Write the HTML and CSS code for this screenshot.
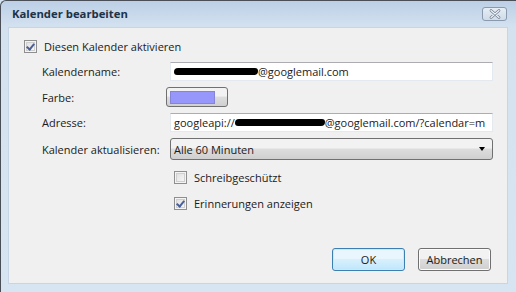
FILE: index.html
```html
<!DOCTYPE html>
<html lang="de">
<head>
    <meta charset="UTF-8">
    <title>Kalender bearbeiten</title>
    <link rel="stylesheet" href="styles.css">
</head>
<body>
    <div class="window">
        <div class="titlebar">
            <span class="title">Kalender bearbeiten</span>
            <span class="close">
                <svg width="14" height="10" viewBox="0 0 14 10">
                    <path d="M3 1.5 L11 8.5 M11 1.5 L3 8.5" stroke="#6b7b8e" stroke-width="2.6" stroke-linecap="round"/>
                    <path d="M3 1.5 L11 8.5 M11 1.5 L3 8.5" stroke="#f4f7fa" stroke-width="1.2" stroke-linecap="round"/>
                </svg>
            </span>
        </div>

        <div class="client">
            <div class="check">
                <span class="box checked"></span>
                <span>Diesen Kalender aktivieren</span>
            </div>

            <div class="form">
                <div class="label">Kalendername:</div>
                <div class="input"><span class="redact redact-name"></span>@googlemail.com</div>

                <div class="label">Farbe:</div>
                <div><span class="color-btn"><span class="swatch"></span></span></div>

                <div class="label">Adresse:</div>
                <div class="input">googleapi://<span class="redact redact-url"></span>@googlemail.com/?calendar=m</div>

                <div class="label">Kalender aktualisieren:</div>
                <div class="select">
                    <span>Alle 60 Minuten</span>
                    <span class="arrow"></span>
                </div>
            </div>

            <div class="checks">
                <div class="check">
                    <span class="box"></span>
                    <span>Schreibgeschützt</span>
                </div>
                <div class="check">
                    <span class="box checked"></span>
                    <span>Erinnerungen anzeigen</span>
                </div>
            </div>

            <div class="buttons">
                <button class="btn btn-default">OK</button>
                <button class="btn">Abbrechen</button>
            </div>
        </div>
    </div>
</body>
</html>
```

FILE: styles.css
```css
* {
    margin: 0;
    padding: 0;
    box-sizing: border-box;
}

body {
    width: 516px;
    height: 292px;
    overflow: hidden;
    font-family: "Open Sans", "Noto Sans", sans-serif;
    font-size: 11px;
    color: #1a1a1a;
    background: #d6e3f1;
}

.window {
    width: 530px;
    height: 300px;
    border-left: 1px solid #4a4f57;
    border-top: 1px solid #4a4f57;
    border-top-left-radius: 6px;
    background: linear-gradient(#bccfe5, #d4e2f0 26px, #d7e4f1);
    display: flex;
    flex-direction: column;
}

.titlebar {
    height: 26px;
    flex-shrink: 0;
    display: flex;
    align-items: center;
    padding: 0 0 0 11px;
    width: 516px;
}

.title {
    font-weight: 700;
    color: #1e3248;
    font-size: 11.3px;
    flex: 1;
    padding-bottom: 1px;
}

.close {
    width: 25px;
    height: 14px;
    margin-right: 10px;
    border: 1px solid #8a9aae;
    border-radius: 3px;
    background: linear-gradient(#e6edf5, #cfdbe8);
    display: flex;
    align-items: center;
    justify-content: center;
}

.client {
    width: 500px;
    height: 257px;
    margin-left: 7px;
    background: #f0f0f0;
    border: 1px solid #c7d5e5;
    padding: 12px 14px 12px 15px;
    display: flex;
    flex-direction: column;
}

.check {
    display: flex;
    align-items: center;
    gap: 7px;
    height: 13px;
}

.box {
    width: 13px;
    height: 13px;
    border: 1px solid #8f8f8f;
    background: linear-gradient(135deg, #dcdcdc, #fbfbfb);
    box-shadow: inset 0 0 0 1px #f4f4f4, inset 0 0 0 2px #cfcfcf;
    position: relative;
    flex-shrink: 0;
}

.box.checked::after {
    content: "";
    position: absolute;
    left: 3px;
    top: 1px;
    width: 3px;
    height: 6px;
    border-right: 2px solid #4a5f97;
    border-bottom: 2px solid #4a5f97;
    transform: rotate(40deg);
}

.form {
    margin-top: 9px;
    display: grid;
    grid-template-columns: 146px 323px;
    grid-template-rows: 19px 20px 19px 22px;
    row-gap: 6px;
    align-items: center;
}

.label {
    padding-left: 18px;
    white-space: nowrap;
}

.input {
    height: 19px;
    background: #fff;
    border: 1px solid #e3e9ef;
    border-top-color: #abadb3;
    padding: 0 3px;
    display: flex;
    align-items: center;
    white-space: nowrap;
    overflow: hidden;
}

.redact {
    display: inline-block;
    height: 7px;
    background: #000;
    border-radius: 4px 3px 4px 3px;
    flex-shrink: 0;
}

.redact-name {
    width: 84px;
}

.redact-url {
    width: 90px;
}

.color-btn {
    display: flex;
    align-items: center;
    justify-content: center;
    width: 62px;
    height: 20px;
    margin-left: -4px;
    border: 1px solid #707070;
    border-radius: 3px;
    background: linear-gradient(#f2f2f2 45%, #dddddd 50%, #cfcfcf);
    padding-right: 10px;
}

.swatch {
    width: 45px;
    height: 13px;
    background: #9797fb;
    border: 1px solid #8585d8;
}

.select {
    height: 22px;
    border: 1px solid #707070;
    border-radius: 3px;
    background: linear-gradient(#f2f2f2 45%, #dddddd 50%, #cfcfcf);
    display: flex;
    align-items: center;
    justify-content: space-between;
    padding: 0 7px 0 3px;
}

.arrow {
    width: 0;
    height: 0;
    border-left: 3.5px solid transparent;
    border-right: 3.5px solid transparent;
    border-top: 4px solid #000;
}

.checks {
    margin-top: 11px;
    margin-left: 150px;
    display: flex;
    flex-direction: column;
    gap: 13px;
}

.buttons {
    margin-top: auto;
    display: flex;
    justify-content: flex-end;
    gap: 13px;
    padding-right: 2px;
}

.btn {
    width: 73px;
    height: 23px;
    font-family: "Open Sans", "Noto Sans", sans-serif;
    font-size: 11px;
    color: #1a1a1a;
    border: 1px solid #707070;
    border-radius: 3px;
    background: linear-gradient(#f2f2f2 45%, #dddddd 50%, #cfcfcf);
    box-shadow: inset 0 0 0 1px #fcfcfc;
}

.btn-default {
    border-color: #3c7fb1;
    box-shadow: inset 0 0 0 1px #c9eaf9;
    background: linear-gradient(#eaf6fd 45%, #d9f0fc 50%, #bee6fd);
}
```
